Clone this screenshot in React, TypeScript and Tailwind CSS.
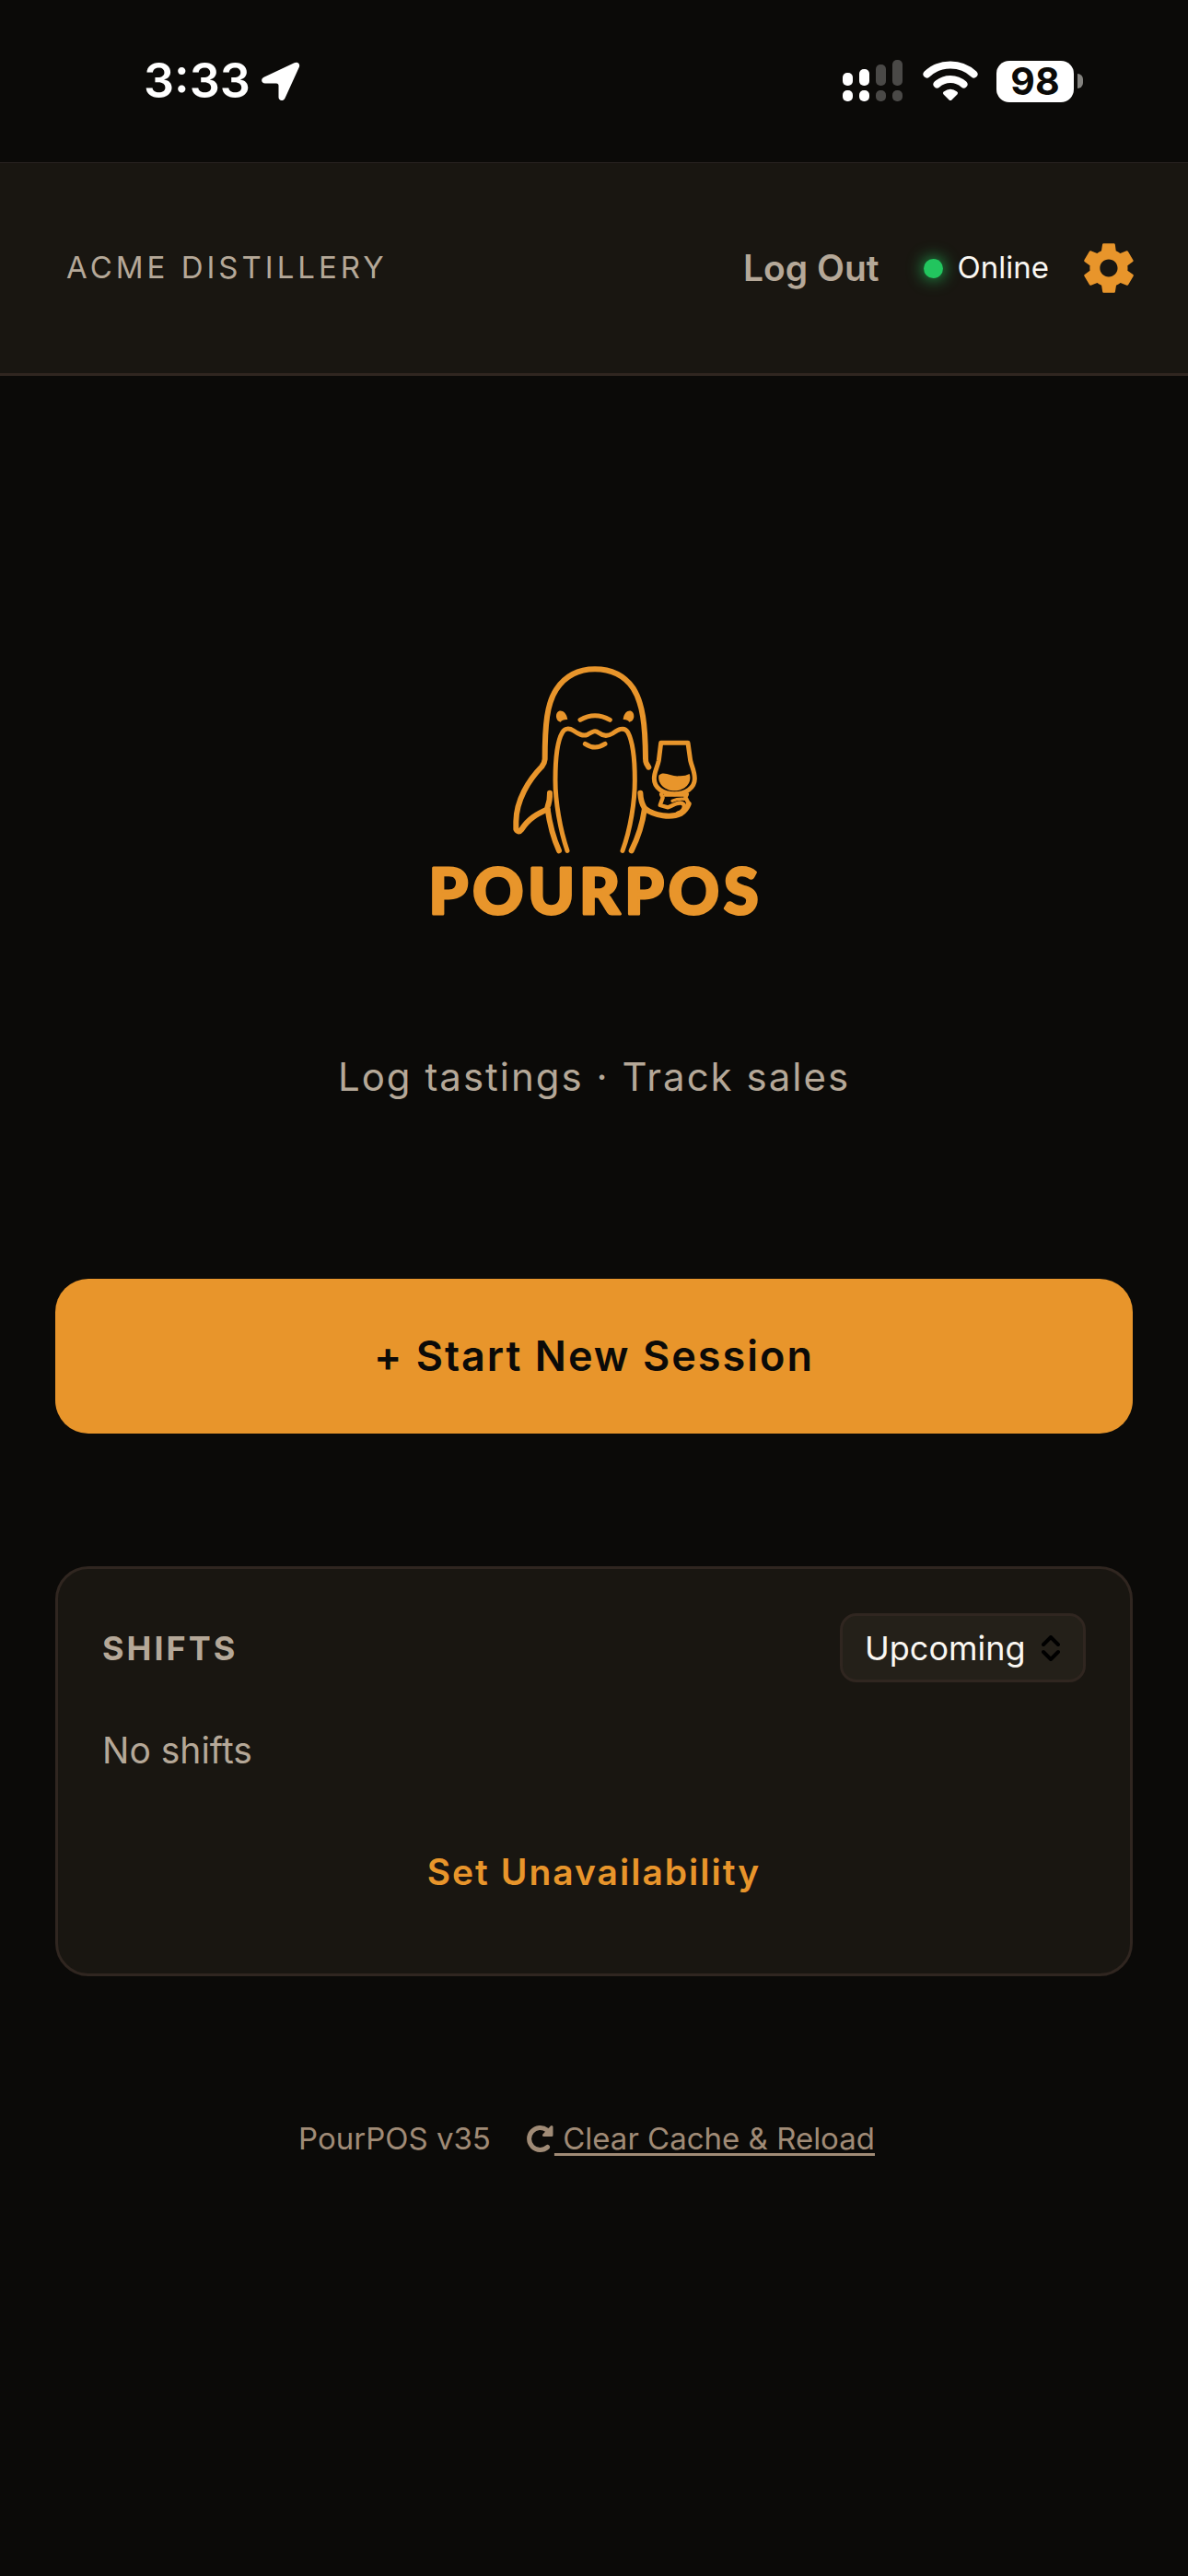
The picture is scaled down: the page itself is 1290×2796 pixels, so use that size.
import { IoMdSettings } from "react-icons/io";

function StatusBar() {
  return (
    <div className="flex h-44 items-center justify-between pr-[114px] pl-39 text-white">
      <div className="flex items-center gap-3">
        <time className="text-[52px] leading-none font-semibold">3:33</time>
        <svg width="42" height="43" viewBox="0 0 42 43" fill="currentColor" aria-label="Location in use">
          <path d="M35.500 1.200C39 -.5 42 1.800 41 5.500L25.500 39.500C23.500 43.500 18.500 42.500 18.500 38.500V26Q18.500 23.500 16 23.500H4C-.3 23.500 -1.300 18.700 2.600 16.800Z" />
        </svg>
      </div>
      <div className="flex items-center gap-5">
        <svg width="67" height="46" viewBox="0 0 67 46" fill="currentColor" aria-label="Signal">
          <rect x="0" y="14" width="11" height="14" rx="5" />
          <rect x="18" y="10" width="11" height="18" rx="5" />
          <rect x="36" y="5" width="11" height="23" rx="5" fill="#4a4947" />
          <rect x="54" y="0" width="11" height="28" rx="5" fill="#4a4947" />
          <rect x="0" y="33" width="11" height="12" rx="5" />
          <rect x="18" y="33" width="11" height="12" rx="5" />
          <rect x="36" y="33" width="11" height="12" rx="5" fill="#4a4947" />
          <rect x="54" y="33" width="11" height="12" rx="5" fill="#4a4947" />
        </svg>
        <svg width="60" height="45" viewBox="0 0 60 45" fill="none" stroke="currentColor" strokeWidth="8" strokeLinecap="round" aria-label="Wi-Fi">
          <path d="M4.500 14.500C18.500 1.200 41.500 1.200 55.500 14.500" />
          <path d="M15.500 25.500C23.500 18 36.500 18 44.500 25.500" />
          <path d="M24 35Q30 30.500 36 35L30 41Z" fill="currentColor" stroke="currentColor" strokeWidth="4" strokeLinejoin="round" />
        </svg>
        <div className="flex items-center gap-1">
          <div className="flex h-[45px] w-21 items-center justify-center rounded-[14px] bg-white text-[41px] leading-none font-bold text-[#0b0a08]">98</div>
          <div className="h-4 w-[6px] rounded-r-full bg-[#84837f]" />
        </div>
      </div>
    </div>
  );
}

function Header() {
  return (
    <header className="flex h-58 items-center justify-between border-t border-b-3 border-t-[#272220] border-b-[#302620] bg-[#191611] pr-[53px] pl-18">
      <p className="text-[33px] tracking-[4px] text-[#b5a898]">ACME DISTILLERY</p>
      <div className="flex items-center">
        <button type="button" className="text-[39px] font-semibold text-[#b5a898]">Log Out</button>
        <div className="ml-12 flex items-center gap-4">
          <span className="size-[21px] rounded-full bg-[#22c55e] shadow-[0_0_18px_#22c55e]" />
          <span className="text-[33px] text-[#faf7f2]">Online</span>
        </div>
        <button type="button" aria-label="Settings" className="ml-8 text-[#e8952b]">
          <IoMdSettings size={66} />
        </button>
      </div>
    </header>
  );
}

function Logo() {
  return (
    <div className="flex flex-col items-center text-[#e8952b]">
      <svg className="ml-6" width="206" height="210" viewBox="100 60 618 630" fill="none" stroke="currentColor" strokeLinecap="round" strokeLinejoin="round" aria-hidden="true">
        <g strokeWidth="18">
          <path d="M551 398L544 386Q541 381 541 370C540 260 532 190 500 140C470 98 425 79 376 79C325 79 280 100 250 145C220 190 213 260 213 372Q212 385 203 396C160 440 120 505 119 575V600Q127 614 137 601C160 565 185 552 222 535" />
          <path d="M229 482Q230 508 221 530C228 580 243 635 259 670" />
          <path d="M524 482Q525 512 538 532C530 590 510 640 495 670" />
          <path d="M538 532C570 557 625 564 656 549Q674 537 681 518" />
        </g>
        <g strokeWidth="15">
          <path d="M286 670C262 600 247 510 247 440C247 370 255 310 270 285C278 271 292 270 306 279C322 290 336 298 352 292C366 284 376 276 388 286C402 297 418 298 434 288C446 280 470 262 483 284C498 312 506 370 506 440C506 510 492 600 466 670" />
          <path d="M328 244Q376 216 425 244" />
          <path d="M344 322Q376 344 409 322" />
          <path d="M591 319H679L687 376C692 398 701 412 701 436C701 466 672 485 635 485C598 485 569 466 569 436C569 412 580 398 584 376Z" />
          <path d="M592 486L597 497L588 522L614 529C636 520 652 508 664 518C672 530 660 544 646 548M676 486L671 496L682 518" strokeWidth="13" />
          <path d="M604 490H668" strokeWidth="9" />
          <path d="M628 508Q646 500 668 502" strokeWidth="10" />
        </g>
        <g fill="currentColor" stroke="none">
          <path d="M250 235C248 206 282 208 287 243Q270 242 264 251Q252 249 250 235Z" />
          <path d="M503 235C505 206 471 208 468 243Q482 242 488 251Q501 249 503 235Z" />
          <path d="M584 425C600 408 626 430 650 427Q670 428 684 420C694 450 668 475 636 475C604 475 580 452 584 425Z" />
        </g>
      </svg>
      <h1>
        <svg className="overflow-visible" width="400" height="77" viewBox="0 0 400 77" fill="currentColor" stroke="currentColor" strokeWidth="3" strokeLinejoin="round">
          <text x="202" y="62" textAnchor="middle" className="font-['Lato',sans-serif] text-[68px] font-black tracking-[5px]">POURPOS</text>
        </svg>
      </h1>
    </div>
  );
}

function Shifts() {
  return (
    <section className="mt-36 rounded-[36px] border-3 border-[#302620] bg-[#191611] px-12 pt-12 pb-17">
      <div className="flex items-center justify-between">
        <h2 id="shifts" className="text-[36px] font-bold tracking-[3px] text-[#b5a898]">SHIFTS</h2>
        <div className="relative">
          <select aria-labelledby="shifts" className="h-[75px] w-[267px] appearance-none rounded-[18px] border-3 border-[#302620] bg-[#242019] pl-6 text-[36px] text-[#faf7f2]">
            <option>Upcoming</option>
            <option>Past</option>
          </select>
          <svg className="pointer-events-none absolute top-6 right-7" width="20" height="28" viewBox="0 0 20 28" fill="none" stroke="#000" strokeWidth="4" strokeLinecap="round" strokeLinejoin="round" aria-hidden="true">
            <path d="M2 10L10 2L18 10M2 18L10 26L18 18" />
          </svg>
        </div>
      </div>
      <p className="mt-11 text-[39px] leading-[60px] text-[#b5a898]">No shifts</p>
      <div className="mt-15 flex justify-center">
        <button type="button" className="px-8 py-3 text-[39px] leading-[60px] font-semibold tracking-[2px] text-[#e8952b]">Set Unavailability</button>
      </div>
    </section>
  );
}

export default function App() {
  return (
    <div className="min-h-screen bg-[#0b0a08] font-['Inter',sans-serif]">
      <StatusBar />
      <Header />
      <main className="px-15 pt-78">
        <Logo />
        <p className="mt-33 text-center text-[42px] leading-[60px] tracking-[2px] text-[#b5a898]">Log tastings · Track sales</p>
        <button type="button" className="mt-[189px] h-42 w-full rounded-[36px] bg-[#e8952b] text-[45px] font-semibold tracking-[2px] text-[#0b0a08]">+ Start New Session</button>
        <Shifts />
        <footer className="mt-[146px] flex items-center justify-center pr-4 text-[33px] leading-[60px] text-[#a08b76]">
          <span>PourPOS v35</span>
          <button type="button" className="ml-[38px] flex items-center">
            <svg width="31" height="30" viewBox="0 0 31 30" fill="none" stroke="currentColor" strokeWidth="5" strokeLinecap="round" strokeLinejoin="round" aria-hidden="true">
              <path d="M23.500 24.500A12 12 0 1 1 23 6" />
              <path d="M28 2.500V11.500H19.500Z" fill="currentColor" strokeWidth="3" />
            </svg>
            <span className="whitespace-pre underline decoration-3 underline-offset-4"> Clear Cache &amp; Reload</span>
          </button>
        </footer>
      </main>
    </div>
  );
}
